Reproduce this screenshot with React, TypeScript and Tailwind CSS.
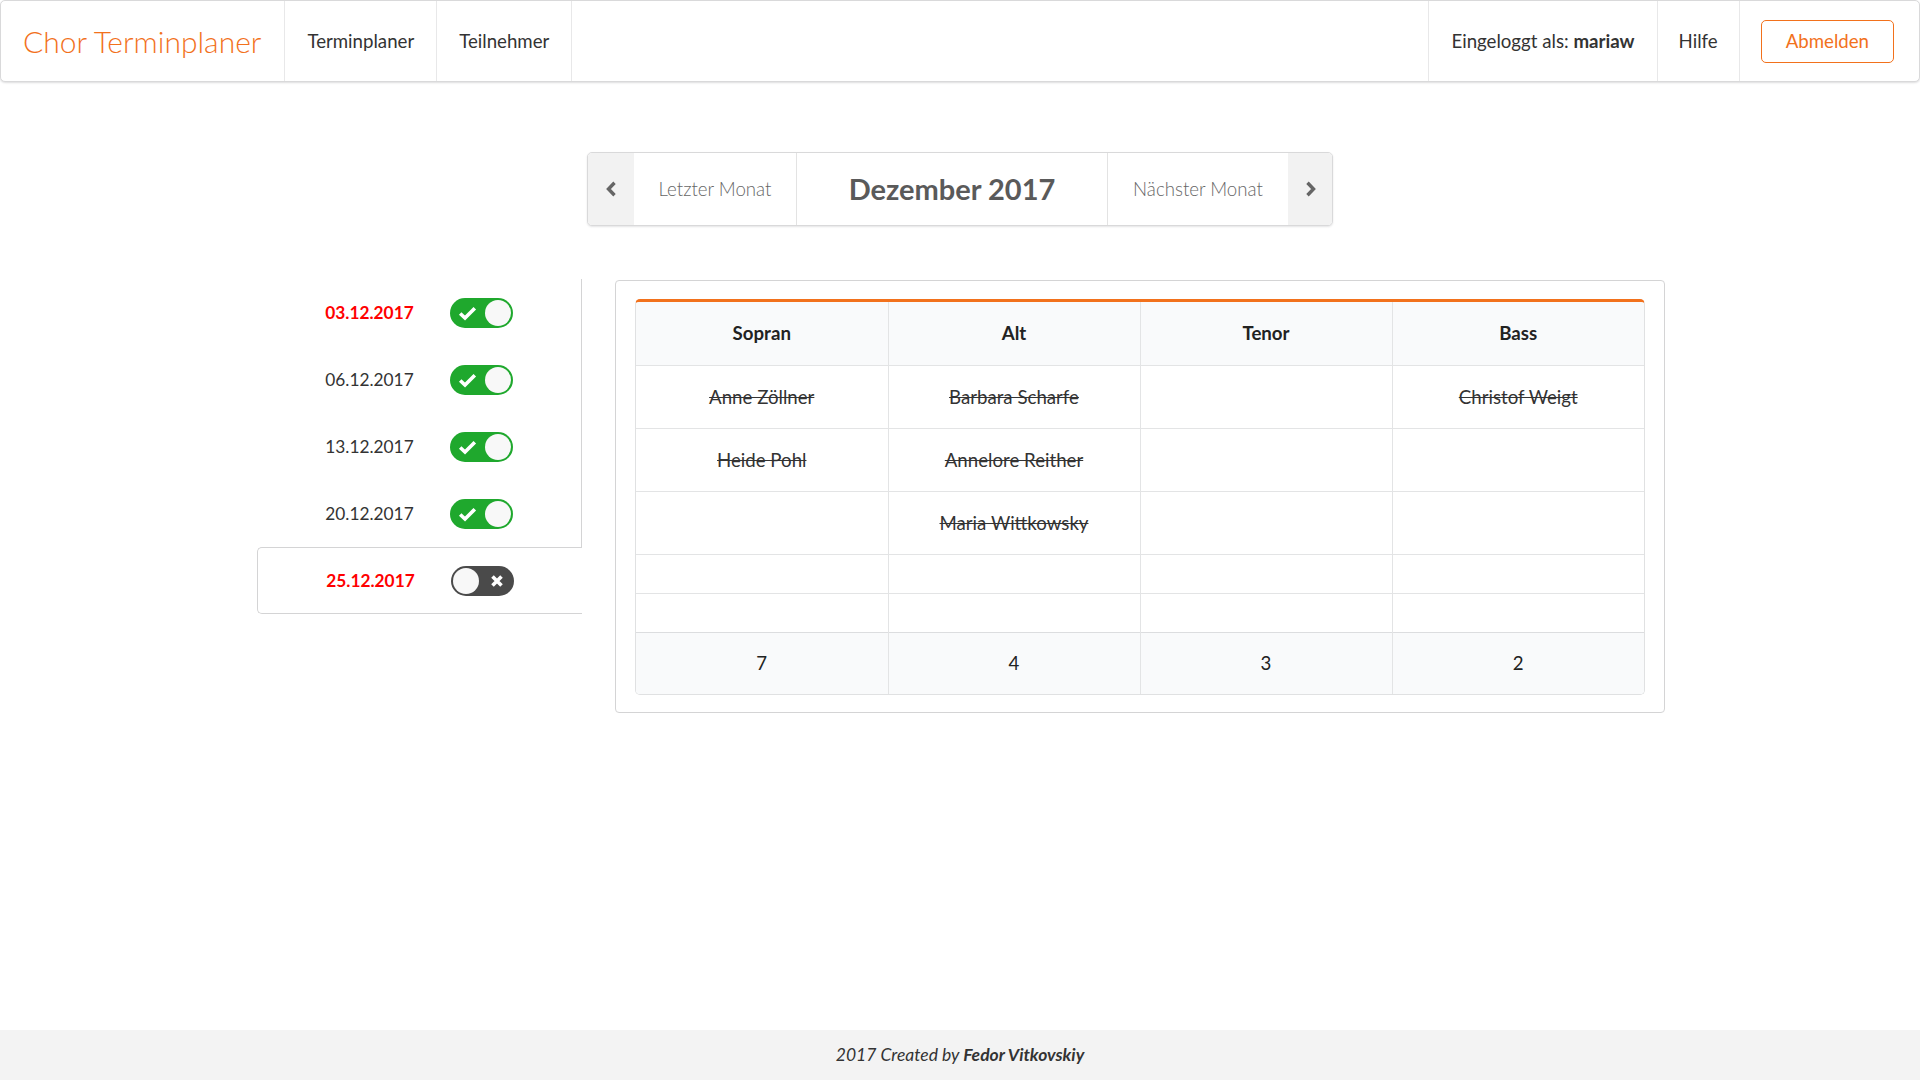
import { useState } from "react";

const FONT = { fontFamily: "Lato, 'Open Sans', sans-serif" };

type DateItem = { date: string; highlight: boolean; going: boolean };

const DATES: DateItem[] = [
  { date: "03.12.2017", highlight: true, going: true },
  { date: "06.12.2017", highlight: false, going: true },
  { date: "13.12.2017", highlight: false, going: true },
  { date: "20.12.2017", highlight: false, going: true },
  { date: "25.12.2017", highlight: true, going: false },
];

const ROWS: string[][] = [
  ["Anne Zöllner", "Barbara Scharfe", "", "Christof Weigt"],
  ["Heide Pohl", "Annelore Reither", "", ""],
  ["", "Maria Wittkowsky", "", ""],
];

const VOICES = ["Sopran", "Alt", "Tenor", "Bass"];
const TOTALS = [7, 4, 3, 2];

function Chevron({ dir }: { dir: "left" | "right" }) {
  return (
    <svg width="13" height="16" viewBox="0 0 13 16" className="text-[#666]">
      {dir === "left" ? (
        <path d="M9.5 1.8 3.5 8l6 6.2" fill="none" stroke="currentColor" strokeWidth="3.4" strokeLinejoin="miter" />
      ) : (
        <path d="M3.5 1.8 9.5 8l-6 6.2" fill="none" stroke="currentColor" strokeWidth="3.4" strokeLinejoin="miter" />
      )}
    </svg>
  );
}

function Toggle({ on, onClick }: { on: boolean; onClick: () => void }) {
  return (
    <button
      onClick={onClick}
      className={[
        "relative h-[30px] w-[63px] shrink-0 rounded-full",
        on ? "bg-[#1fa82d]" : "bg-[#4a4a4a]",
      ].join(" ")}
    >
      {/* knob */}
      <span
        className={[
          "absolute top-[2px] h-[26px] w-[26px] rounded-full bg-[#f8f8f8]",
          on ? "right-[2px]" : "left-[2px]",
        ].join(" ")}
      />
      {on ? (
        <svg width="19" height="15" viewBox="0 0 19 15" className="absolute left-[8px] top-[8px]">
          <path d="M2.2 7.5 7 12 16.8 2.2" fill="none" stroke="white" strokeWidth="3.6" />
        </svg>
      ) : (
        <svg width="14" height="14" viewBox="0 0 14 14" className="absolute right-[10px] top-[8px]">
          <path d="M2.5 2.5l9 9M11.5 2.5l-9 9" fill="none" stroke="white" strokeWidth="3.6" />
        </svg>
      )}
    </button>
  );
}

export default function App() {
  const [going, setGoing] = useState<boolean[]>(DATES.map((d) => d.going));
  const active = 4;

  return (
    <div className="flex min-h-screen flex-col bg-white text-[18.67px] text-[#333]" style={FONT}>
      {/* top menu */}
      <nav className="flex h-[82px] items-stretch rounded-[5px] border border-[#d9d9da] bg-white shadow-[0_1px_2px_0_rgba(34,36,38,0.15)]">
        <div className="flex items-center border-r border-[#e8e8e9] pl-[22px] pr-[23px] text-[30px] font-light text-[#f2711c]">
          Chor Terminplaner
        </div>
        <a className="flex items-center border-r border-[#e8e8e9] px-[22px] text-[#333]">Terminplaner</a>
        <a className="flex items-center border-r border-[#e8e8e9] px-[22px] text-[#333]">Teilnehmer</a>
        <div className="ml-auto flex items-center border-l border-r border-[#e8e8e9] px-[22px]">
          Eingeloggt als:&nbsp;<b className="font-bold">mariaw</b>
        </div>
        <a className="flex items-center border-r border-[#e8e8e9] px-[21px]">Hilfe</a>
        <div className="flex items-center pl-[21px] pr-[25px]">
          <button className="h-[43px] rounded-[5px] border border-[#f2711c] px-[24px] text-[#f2711c]">
            Abmelden
          </button>
        </div>
      </nav>

      <main className="flex flex-1 flex-col items-center">
        {/* month switcher */}
        <div className="mt-[70px] flex h-[74px] items-stretch overflow-hidden rounded-[5px] border border-[#d9d9da] bg-white shadow-[0_1px_2px_0_rgba(34,36,38,0.12)]">
          <button className="flex w-[46px] items-center justify-center bg-[#f2f2f2]">
            <Chevron dir="left" />
          </button>
          <button className="flex w-[163px] items-center justify-center border-r border-[#e3e3e3] font-light text-[#666]">
            Letzter Monat
          </button>
          <div className="flex w-[311px] items-center justify-center border-r border-[#e3e3e3] text-[29px] font-bold text-[#5a5a5a]">
            Dezember 2017
          </div>
          <button className="flex w-[180px] items-center justify-center font-light text-[#666]">
            Nächster Monat
          </button>
          <button className="flex w-[44px] items-center justify-center bg-[#f2f2f2]">
            <Chevron dir="right" />
          </button>
        </div>

        <div className="mt-[53px] flex w-[1408px] translate-x-[1px] items-start gap-[33px]">
          {/* dates menu */}
          <div className="w-[325px] shrink-0 border-r border-[#d4d4d5]">
            {DATES.map((d, i) => (
              <div
                key={d.date}
                className={[
                  "flex h-[67px] items-center justify-center gap-[36px]",
                  i === active
                    ? "-mr-px rounded-l-[5px] border border-r-0 border-[#d4d4d5] bg-white"
                    : "",
                ].join(" ")}
              >
                <span className={["text-[17.3px]", d.highlight ? "font-bold text-[#ff0000]" : "text-[#333]"].join(" ")}>
                  {d.date}
                </span>
                <Toggle
                  on={going[i]}
                  onClick={() => setGoing(going.map((g, j) => (j === i ? !g : g)))}
                />
              </div>
            ))}
          </div>

          {/* voices table */}
          <div className="mt-px w-[1050px] rounded-[4px] border border-[#d4d4d5] px-[19px] pb-[17px] pt-[18px]">
            <div className="overflow-hidden rounded-[5px] border border-t-[3px] border-[#e0e1e2] border-t-[#f2711c]">
              <table className="w-full table-fixed border-collapse text-center">
                <thead>
                  <tr className="h-[63px] bg-[#f9fafb]">
                    {VOICES.map((v, i) => (
                      <th
                        key={v}
                        className={["font-bold text-[#222]", i > 0 ? "border-l border-[#e3e4e5]" : ""].join(" ")}
                      >
                        {v}
                      </th>
                    ))}
                  </tr>
                </thead>
                <tbody>
                  {ROWS.map((r, ri) => (
                    <tr key={ri} className="h-[63px] border-t border-[#e3e4e5]">
                      {r.map((name, ci) => (
                        <td key={ci} className={ci > 0 ? "border-l border-[#e3e4e5]" : ""}>
                          {name && <span className="text-[#333] line-through">{name}</span>}
                        </td>
                      ))}
                    </tr>
                  ))}
                  {[0, 1].map((k) => (
                    <tr key={`e${k}`} className="h-[39px] border-t border-[#e3e4e5]">
                      {VOICES.map((v, ci) => (
                        <td key={v} className={ci > 0 ? "border-l border-[#e3e4e5]" : ""} />
                      ))}
                    </tr>
                  ))}
                </tbody>
                <tfoot>
                  <tr className="h-[62px] border-t border-[#dcdddf] bg-[#f9fafb]">
                    {TOTALS.map((t, ci) => (
                      <td key={ci} className={["text-[#222]", ci > 0 ? "border-l border-[#e3e4e5]" : ""].join(" ")}>
                        {t}
                      </td>
                    ))}
                  </tr>
                </tfoot>
              </table>
            </div>
          </div>
        </div>
      </main>

      <footer className="flex h-[50px] items-center justify-center bg-[#f3f3f3] text-[17.5px] italic text-[#333]">
        2017 Created by&nbsp;<b className="font-bold">Fedor Vitkovskiy</b>
      </footer>
    </div>
  );
}
